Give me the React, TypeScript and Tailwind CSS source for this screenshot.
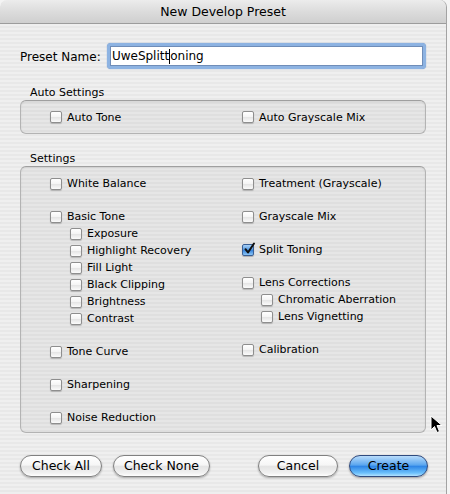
import React, { useState } from "react";

type Item = { label: string; sub?: boolean };

const leftGroups: Item[][] = [
    [{ label: "White Balance" }],
    [
        { label: "Basic Tone" },
        { label: "Exposure", sub: true },
        { label: "Highlight Recovery", sub: true },
        { label: "Fill Light", sub: true },
        { label: "Black Clipping", sub: true },
        { label: "Brightness", sub: true },
        { label: "Contrast", sub: true },
    ],
    [{ label: "Tone Curve" }],
    [{ label: "Sharpening" }],
    [{ label: "Noise Reduction" }],
];

const rightGroups: Item[][] = [
    [{ label: "Treatment (Grayscale)" }],
    [{ label: "Grayscale Mix" }],
    [{ label: "Split Toning" }],
    [
        { label: "Lens Corrections" },
        { label: "Chromatic Aberration", sub: true },
        { label: "Lens Vignetting", sub: true },
    ],
    [{ label: "Calibration" }],
];

const Checkbox = ({ checked }: { checked: boolean }) => {
    if (checked) {
        return (
            <span className="relative w-[12px] h-[12px] shrink-0 rounded-[2px] border border-[#3a5f95] bg-[linear-gradient(180deg,#a9d2f7_0%,#4f95e0_50%,#3b86dc_55%,#8cc6f6_100%)] shadow-[0_1px_1px_rgba(0,0,0,0.25)]">
                <svg className="absolute left-[0px] top-[-3px]" width="13" height="13" viewBox="0 0 13 13">
                    <path d="M2.5 7.2 L5 10.5 L11 1.5" fill="none" stroke="#111" strokeWidth="2" strokeLinecap="round" strokeLinejoin="round" />
                </svg>
            </span>
        );
    }
    return (
        <span className="w-[12px] h-[12px] shrink-0 rounded-[2px] border border-[#8e8e8e] bg-[linear-gradient(180deg,#ffffff_0%,#f4f4f4_50%,#e6e6e6_55%,#fbfbfb_100%)] shadow-[0_1px_1px_rgba(0,0,0,0.2)]" />
    );
};

const CheckRow = ({ label, checked, onToggle, indent }: { label: string; checked: boolean; onToggle: () => void; indent?: string }) => {
    return (
        <div className={"flex items-center gap-[5px] h-[17px] cursor-default " + (indent ?? "")} onClick={onToggle}>
            <Checkbox checked={checked} />
            <span className="text-[11px] leading-[13px] text-black whitespace-nowrap">{label}</span>
        </div>
    );
};

const PillButton = ({ label, width, primary }: { label: string; width: string; primary?: boolean }) => {
    const base = "h-[22px] rounded-full text-[12.5px] leading-[20px] text-black flex items-center justify-center ";
    const look = primary
        ? "border border-[#2f4a7e] bg-[linear-gradient(180deg,#b9dcfb_0%,#5aa6ef_45%,#2f86e6_52%,#6cc0fb_85%,#b2e2ff_100%)] shadow-[0_1px_2px_rgba(0,0,0,0.35)]"
        : "border border-[#808080] bg-[linear-gradient(180deg,#ffffff_0%,#f6f6f6_45%,#e4e4e4_52%,#f1f1f1_85%,#ffffff_100%)] shadow-[0_1px_2px_rgba(0,0,0,0.3)]";
    return (
        <button type="button" className={base + width + " " + look}>
            {label}
        </button>
    );
};

const App = () => {
    const [checked, setChecked] = useState<Record<string, boolean>>({ "Split Toning": true });

    function toggle(label: string) {
        setChecked((prev) => ({ ...prev, [label]: !prev[label] }));
    }

    const renderColumn = (groups: Item[][], subIndent: string, width: string) => (
        <div className={"flex flex-col gap-[16px] " + width}>
            {groups.map((group, i) => (
                <div key={i} className="flex flex-col">
                    {group.map((item) => (
                        <CheckRow
                            key={item.label}
                            label={item.label}
                            checked={!!checked[item.label]}
                            onToggle={() => toggle(item.label)}
                            indent={item.sub ? subIndent : ""}
                        />
                    ))}
                </div>
            ))}
        </div>
    );

    const stripes = "bg-[repeating-linear-gradient(180deg,#efefef_0px,#efefef_2px,#e8e8e8_2px,#e8e8e8_4px)]";

    return (
        <div className="relative w-[450px] h-[494px] overflow-hidden bg-[#f4f4f4] font-['DejaVu_Sans','Lucida_Grande',sans-serif]">
            <div className={"w-[447px] h-[494px] flex flex-col rounded-t-[7px] border-r border-[#a3a3a3] overflow-hidden " + stripes}>
                {/* title bar */}
                <div className="h-[24px] shrink-0 flex items-center justify-center pt-[1px] border-b border-[#9c9c9c] bg-[linear-gradient(180deg,#ececec_0%,#dcdcdc_50%,#cfcfcf_100%)] rounded-t-[7px]">
                    <span className="text-[12.5px] text-black">New Develop Preset</span>
                </div>

                <div className="flex flex-col px-[20px]">
                    {/* preset name */}
                    <div className="flex items-center mt-[19px] h-[26px]">
                        <span className="w-[88px] text-[12px] text-black pt-[1px]">Preset Name:</span>
                        <div className="w-[323px] h-[26px] rounded-[4px] p-[3px] bg-[#8db3e2] shadow-[0_0_1px_#5b84bd]">
                            <div className="h-full bg-white border border-[#6f8db8] flex items-center pl-[1px] text-[12px] text-black">
                                <span>UweSplitt</span>
                                <span className="w-[1px] h-[15px] bg-black" />
                                <span>oning</span>
                            </div>
                        </div>
                    </div>

                    {/* auto settings */}
                    <div className="mt-[17px] pl-[10px] h-[14px] text-[11px] leading-[14px] text-black">Auto Settings</div>
                    <div className="h-[34px] rounded-[6px] border border-[#b3b3b3] border-t-[#9f9f9f] bg-black/[0.035] shadow-[inset_0_1px_2px_rgba(0,0,0,0.08)] flex items-center pl-[29px]">
                        <div className="w-[192px]">
                            <CheckRow label="Auto Tone" checked={!!checked["Auto Tone"]} onToggle={() => toggle("Auto Tone")} />
                        </div>
                        <CheckRow label="Auto Grayscale Mix" checked={!!checked["Auto Grayscale Mix"]} onToggle={() => toggle("Auto Grayscale Mix")} />
                    </div>

                    {/* settings */}
                    <div className="mt-[18px] pl-[10px] h-[14px] text-[11px] leading-[14px] text-black">Settings</div>
                    <div className="h-[267px] rounded-[6px] border border-[#b3b3b3] border-t-[#9f9f9f] bg-black/[0.035] shadow-[inset_0_1px_2px_rgba(0,0,0,0.08)] flex pl-[29px] pt-[8px]">
                        {renderColumn(leftGroups, "pl-[20px]", "w-[192px]")}
                        {renderColumn(rightGroups, "pl-[19px]", "")}
                    </div>

                    {/* buttons */}
                    <div className="mt-[22px] flex items-center">
                        <PillButton label="Check All" width="w-[82px]" />
                        <div className="ml-[11px]">
                            <PillButton label="Check None" width="w-[97px]" />
                        </div>
                        <div className="ml-auto flex gap-[11px] mr-[-2px]">
                            <PillButton label="Cancel" width="w-[80px]" />
                            <PillButton label="Create" width="w-[79px]" primary />
                        </div>
                    </div>
                </div>
            </div>

            {/* mouse pointer */}
            <svg className="absolute left-[430px] top-[415px]" width="14" height="20" viewBox="0 0 14 20">
                <path d="M1 1 L1 15 L4.5 11.5 L7 17.5 L9.5 16.5 L7 10.5 L12 10.5 Z" fill="#000" stroke="#fff" strokeWidth="1" strokeLinejoin="round" />
            </svg>
        </div>
    );
};

export default App;
